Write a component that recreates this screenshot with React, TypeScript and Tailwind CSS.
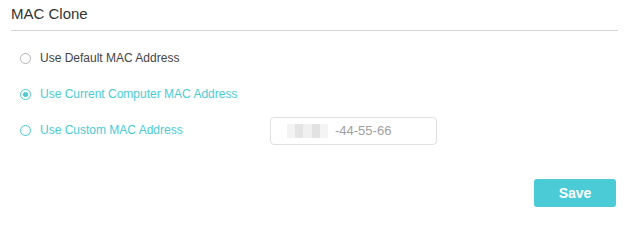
import React from "react";

function Radio({ state }: { state: "off" | "on" | "hover" }) {
  const border = state === "off" ? "border-[#b5b5b5]" : "border-[#4acbd6]";
  return (
    <span className={`w-[11px] h-[11px] rounded-full border ${border} flex items-center justify-center shrink-0 bg-white`}>
      {state === "on" && <span className="w-[5px] h-[5px] rounded-full bg-[#4acbd6]" />}
    </span>
  );
}

export default function App() {
  return (
    <div className="w-[633px] h-[218px] bg-white pl-[11px] pr-[15px] font-['Liberation_Sans',Arial,sans-serif]">
      <div className="h-[31px] border-b border-[#d6d6d6] pt-[3px] text-[15px] leading-[22px] text-[#333]">
        MAC Clone
      </div>
      <div className="pt-[9px] pl-[9px]">
        <div className="h-[36px] flex items-center">
          <div className="w-[250px] flex items-center gap-[9px]">
            <Radio state="off" />
            <span className="text-[12px] text-[#444]">Use Default MAC Address</span>
          </div>
        </div>
        <div className="h-[36px] flex items-center">
          <div className="w-[250px] flex items-center gap-[9px]">
            <Radio state="on" />
            <span className="text-[12px] text-[#4acbd6]">Use Current Computer MAC Address</span>
          </div>
        </div>
        <div className="h-[36px] flex items-center">
          <div className="w-[250px] flex items-center gap-[9px]">
            <Radio state="hover" />
            <span className="text-[12px] text-[#4acbd6]">Use Custom MAC Address</span>
          </div>
          <div className="w-[167px] h-[28px] border border-[#e0e0e0] rounded-[4px] flex items-center pl-[16px] mt-[2px]">
            <span className="flex h-[14px]">
              <span className="w-[8px] h-[14px] bg-[#f3f3f3]" />
              <span className="w-[8px] h-[14px] bg-[#e4e4e4]" />
              <span className="w-[9px] h-[14px] bg-[#f0f0f0]" />
              <span className="w-[8px] h-[14px] bg-[#e2e2e2]" />
              <span className="w-[8px] h-[14px] bg-[#f4f4f4]" />
            </span>
            <span className="ml-[7px] text-[13px] text-[#a0a0a0]">-44-55-66</span>
          </div>
        </div>
      </div>
      <div className="flex justify-end mt-[31px] pr-[2px]">
        <button className="w-[82px] h-[28px] rounded-[3px] bg-[#4acbd6] text-white font-bold text-[14px]">
          Save
        </button>
      </div>
    </div>
  );
}
